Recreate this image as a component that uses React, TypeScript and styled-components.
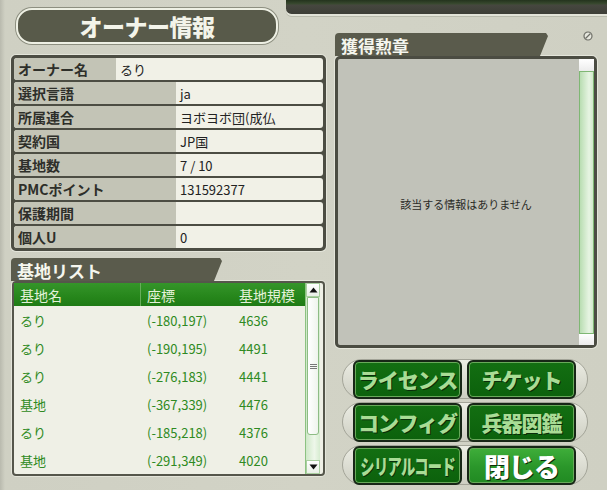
import React from "react";
import styled, { createGlobalStyle, css } from "styled-components";

const Global = createGlobalStyle`
  html, body { margin: 0; padding: 0; background: #d0d1c4; }
  body { font-family: "Noto Sans CJK JP", "Noto Sans", sans-serif; }
  * { box-sizing: border-box; }
`;

const Frame = styled.div`
  position: relative;
  width: 607px;
  height: 490px;
  overflow: hidden;
  display: flex;
  padding-left: 11px;
  background: linear-gradient(to right, #b9baae 0, #cfd0c3 5px, #d2d3c6 50%, #cfd0c3 100%);
  &::before {
    content: "";
    position: absolute;
    top: 0;
    left: 286px;
    width: 345px;
    height: 14px;
    background: linear-gradient(to bottom, #24331d 0, #3a4a30 4px, #46473f 5px, #3d3e37 100%);
    border-radius: 0 0 40px 16px;
    box-shadow: 0 2px 0 #e2e3d8, 0 3px 0 #b9bbad;
  }
`;

const LeftCol = styled.div`
  width: 315px;
  display: flex;
  flex-direction: column;
  padding-top: 8px;
`;

const TitlePill = styled.div`
  margin-left: 5px;
  width: 262px;
  height: 36px;
  border-radius: 16px;
  background: #585a4a;
  border: 2px solid #eef0e4;
  box-shadow: 0 0 0 1px #8d8f80;
  display: flex;
  align-items: center;
  justify-content: center;
  color: #f3f4ea;
  font-weight: 900;
  font-size: 23px;
  letter-spacing: -0.5px;
`;

const InfoPanel = styled.div`
  margin-top: 11px;
  width: 315px;
  height: 196px;
  border: 3px solid #4c4d43;
  border-radius: 5px;
  background: #4c4d43;
  display: flex;
  flex-direction: column;
  gap: 2px;
  box-shadow: 0 0 0 1px #e4e5da;
`;

const InfoRow = styled.div`
  height: 22px;
  display: flex;
  border-radius: 3px;
  overflow: hidden;
  background: #f1f1e7;
`;

const Label = styled.div<{ $w: number }>`
  width: ${(p) => p.$w}px;
  background: #c3c4b6;
  display: flex;
  align-items: center;
  padding-left: 4px;
  font-size: 14px;
  font-weight: 700;
  color: #2e2f2a;
`;

const Value = styled.div`
  flex: 1;
  display: flex;
  align-items: center;
  padding-left: 4px;
  font-size: 13px;
  color: #222;
`;

const SectionTab = styled.div<{ $w: number; $mt: number }>`
  margin-top: ${(p) => p.$mt}px;
  width: ${(p) => p.$w}px;
  height: 23px;
  background: #5a5b4c;
  color: #f5f6ee;
  font-weight: 700;
  font-size: 17px;
  display: flex;
  align-items: center;
  padding-left: 6px;
  padding-top: 1px;
  border-radius: 4px 0 0 0;
  clip-path: polygon(0 0, calc(100% - 2px) 0, 100% 3px, calc(100% - 8px) 100%, 0 100%);
`;

const ListPanel = styled.div`
  margin-left: 1px;
  width: 313px;
  height: 195px;
  border: 2px solid #55564b;
  border-radius: 4px;
  background: #eff0e6;
  display: flex;
  padding-right: 3px;
  box-shadow: 0 0 0 1px #e4e5da;
`;

const ListBody = styled.div`
  flex: 1;
  display: flex;
  flex-direction: column;
`;

const gridCols = css`
  display: grid;
  grid-template-columns: 127px 92px 1fr;
`;

const ListHeader = styled.div`
  ${gridCols};
  height: 23px;
  background: linear-gradient(to bottom, #35952a 0, #26861b 60%, #1f7b15 100%);
  color: #e4f2da;
  font-size: 14px;
  align-items: center;
`;

const HeadCell = styled.div<{ $div?: boolean }>`
  height: 100%;
  display: flex;
  align-items: center;
  padding-left: 6px;
  border-right: ${(p) => (p.$div ? "1px solid #66ad5a" : "none")};
`;

const ListRow = styled.div`
  ${gridCols};
  height: 28px;
  align-items: center;
  color: #2e8a22;
  font-size: 13px;
`;

const Cell = styled.div`
  padding-left: 6px;
`;

const VScroll = styled.div`
  width: 15px;
  display: flex;
  flex-direction: column;
  background: linear-gradient(to right, #cfe8c8, #eef7ea 60%, #d6ecd0);
  border-left: 1px solid #8cc282;
`;

const ArrowBtn = styled.div`
  height: 14px;
  display: flex;
  align-items: center;
  justify-content: center;
  background: linear-gradient(to bottom, #ffffff, #e8efe6);
  border: 1px solid #a9cfa0;
`;

const Thumb = styled.div<{ $h: number }>`
  height: ${(p) => p.$h}px;
  margin: 0 1px;
  border: 1px solid #8dbc84;
  border-radius: 0 0 3px 3px;
  background: linear-gradient(to right, #ffffff, #eef4ec);
  display: flex;
  align-items: center;
  justify-content: center;
`;

const Track = styled.div`
  flex: 1;
`;

const RightCol = styled.div`
  margin-left: 9px;
  width: 262px;
  display: flex;
  flex-direction: column;
`;

const TabRow = styled.div`
  margin-top: 33px;
  display: flex;
  align-items: flex-start;
  justify-content: space-between;
`;

const NoIcon = styled.svg`
  margin-top: -2px;
  margin-right: 4px;
`;

const MedalPanel = styled.div`
  width: 262px;
  height: 292px;
  border: 3px solid #4b4c42;
  border-radius: 5px;
  background: #c1c2b9;
  display: flex;
  box-shadow: 0 0 0 1px #e4e5da;
`;

const MedalBody = styled.div`
  flex: 1;
  display: flex;
  align-items: center;
  justify-content: center;
  padding-left: 15px;
  padding-top: 4px;
  font-size: 11px;
  color: #2a2a26;
`;

const MedalScroll = styled.div`
  width: 15px;
  display: flex;
  flex-direction: column;
`;

const Cap = styled.div<{ $h: number }>`
  height: ${(p) => p.$h}px;
  background: linear-gradient(to bottom, #ffffff, #ececec);
`;

const GreenTrack = styled.div`
  flex: 1;
  border: 1px solid #7fb774;
  background: linear-gradient(to right, #b9ddb2, #e7f4e3 70%, #cfe8c8);
`;

const ButtonArea = styled.div`
  margin-top: 11px;
  display: flex;
  flex-direction: column;
  gap: 3px;
`;

const Rail = styled.div`
  margin-left: 7px;
  width: 246px;
  height: 40px;
  padding: 0 11px 0 10px;
  border-radius: 20px;
  border: 1px solid #a3a498;
  background: linear-gradient(to bottom, #ecede4, #cdcec2);
  display: flex;
  align-items: center;
  gap: 5px;
`;

const Btn = styled.div<{ $primary?: boolean }>`
  width: 110px;
  height: 39px;
  border: 2px solid #172616;
  border-radius: 6px;
  box-shadow: inset 0 0 0 1px #68a95a;
  background: ${(p) =>
    p.$primary
      ? "linear-gradient(to bottom, #3fae3a, #2a962a 55%, #218a22)"
      : "linear-gradient(to bottom, #136f12, #0c610c)"};
  color: ${(p) => (p.$primary ? "#ffffff" : "#a9dc95")};
  font-weight: 900;
  font-size: ${(p) => (p.$primary ? 26 : 21)}px;
  display: flex;
  align-items: center;
  justify-content: center;
  letter-spacing: -1px;
  text-shadow: 1px 1px 0 #0a2c0a;
  overflow: hidden;
  white-space: nowrap;
`;

const Squeeze = styled.span<{ $s: number }>`
  display: inline-block;
  transform: scaleX(${(p) => p.$s});
`;

const infoRows: [string, string, number][] = [
  ["オーナー名", "るり", 102],
  ["選択言語", "ja", 162],
  ["所属連合", "ヨボヨボ団(成仏", 162],
  ["契約国", "JP国", 162],
  ["基地数", "7 / 10", 162],
  ["PMCポイント", "131592377", 162],
  ["保護期間", "", 162],
  ["個人U", "0", 162],
];

const bases: [string, string, string][] = [
  ["るり", "(-180,197)", "4636"],
  ["るり", "(-190,195)", "4491"],
  ["るり", "(-276,183)", "4441"],
  ["基地", "(-367,339)", "4476"],
  ["るり", "(-185,218)", "4376"],
  ["基地", "(-291,349)", "4020"],
];

const Up = () => (
  <svg width="9" height="6" viewBox="0 0 9 6">
    <path d="M0.5 5.5 L4.5 0.5 L8.5 5.5 Z" fill="#111" />
  </svg>
);
const Down = () => (
  <svg width="9" height="6" viewBox="0 0 9 6">
    <path d="M0.5 0.5 L4.5 5.5 L8.5 0.5 Z" fill="#111" />
  </svg>
);
const Grip = () => (
  <svg width="7" height="7" viewBox="0 0 7 7">
    <path d="M0 1.5 H7 M0 3.5 H7 M0 5.5 H7" stroke="#777" strokeWidth="1" />
  </svg>
);

export default function App() {
  return (
    <>
      <Global />
      <Frame>
        <LeftCol>
          <TitlePill>オーナー情報</TitlePill>
          <InfoPanel>
            {infoRows.map(([l, v, w]) => (
              <InfoRow key={l}>
                <Label $w={w}>{l}</Label>
                <Value>{v}</Value>
              </InfoRow>
            ))}
          </InfoPanel>
          <SectionTab $w={211} $mt={7}>基地リスト</SectionTab>
          <ListPanel>
            <ListBody>
              <ListHeader>
                <HeadCell $div>基地名</HeadCell>
                <HeadCell>座標</HeadCell>
                <HeadCell>基地規模</HeadCell>
              </ListHeader>
              {bases.map((b, i) => (
                <ListRow key={i}>
                  <Cell>{b[0]}</Cell>
                  <Cell>{b[1]}</Cell>
                  <Cell>{b[2]}</Cell>
                </ListRow>
              ))}
            </ListBody>
            <VScroll>
              <ArrowBtn>
                <Up />
              </ArrowBtn>
              <Thumb $h={138}>
                <Grip />
              </Thumb>
              <Track />
              <ArrowBtn>
                <Down />
              </ArrowBtn>
            </VScroll>
          </ListPanel>
        </LeftCol>
        <RightCol>
          <TabRow>
            <SectionTab $w={213} $mt={0}>獲得勲章</SectionTab>
            <NoIcon width="10" height="10" viewBox="0 0 10 10">
              <circle cx="5" cy="5" r="4" fill="#e6e7de" stroke="#6d6e66" strokeWidth="1.2" />
              <path d="M2.5 7.5 L7.5 2.5" stroke="#6d6e66" strokeWidth="1.2" />
            </NoIcon>
          </TabRow>
          <MedalPanel>
            <MedalBody>該当する情報はありません</MedalBody>
            <MedalScroll>
              <Cap $h={12} />
              <GreenTrack />
              <Cap $h={11} />
            </MedalScroll>
          </MedalPanel>
          <ButtonArea>
            <Rail>
              <Btn>ライセンス</Btn>
              <Btn>チケット</Btn>
            </Rail>
            <Rail>
              <Btn>コンフィグ</Btn>
              <Btn>兵器図鑑</Btn>
            </Rail>
            <Rail>
              <Btn>
                <Squeeze $s={0.68}>シリアルコード</Squeeze>
              </Btn>
              <Btn $primary>閉じる</Btn>
            </Rail>
          </ButtonArea>
        </RightCol>
      </Frame>
    </>
  );
}
